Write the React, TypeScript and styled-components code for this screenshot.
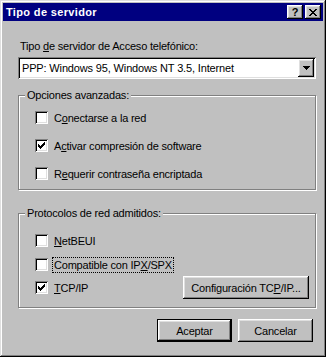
import React, { FC } from "react";
import styled, { createGlobalStyle } from "styled-components";

const GlobalStyle = createGlobalStyle`
  html, body {
    margin: 0;
    padding: 0;
    background: #c0c0c0;
  }
  body {
    font-family: "Liberation Sans", Arial, sans-serif;
    font-size: 11px;
    color: #000;
  }
`;

const raised = `
  box-shadow: inset -1px -1px #000, inset 1px 1px #fff, inset -2px -2px #808080, inset 2px 2px #dfdfdf;
`;

const sunken = `
  box-shadow: inset 1px 1px #808080, inset -1px -1px #fff, inset 2px 2px #000, inset -2px -2px #dfdfdf;
`;

const Window = styled.div`
  width: 326px;
  height: 357px;
  box-sizing: border-box;
  padding: 3px;
  background: #c0c0c0;
  box-shadow: inset -1px -1px #000, inset 1px 1px #dfdfdf, inset -2px -2px #808080, inset 2px 2px #fff;
  display: flex;
  flex-direction: column;
`;

const TitleBar = styled.div`
  height: 18px;
  background: #000080;
  display: flex;
  align-items: center;
  padding: 0 2px 0 3px;
  color: #fff;
`;

const Title = styled.span`
  flex: 1;
  font-weight: bold;
  letter-spacing: 0.35px;
  line-height: 18px;
`;

const CaptionButton = styled.button<{ $gap?: number }>`
  width: 16px;
  height: 14px;
  margin-left: ${(p) => p.$gap ?? 0}px;
  padding: 0;
  border: none;
  background: #c0c0c0;
  ${raised}
  display: flex;
  align-items: center;
  justify-content: center;
  font-family: "Liberation Sans", Arial, sans-serif;
  font-weight: bold;
  font-size: 11px;
  line-height: 14px;
  color: #000;
`;

const Content = styled.div`
  flex: 1;
  display: flex;
  flex-direction: column;
  padding: 19px 7px 0 15px;
`;

const FieldLabel = styled.div`
  line-height: 13px;
  padding-left: 2px;
  letter-spacing: -0.2px;
`;

const Combo = styled.div`
  margin-top: 4px;
  height: 22px;
  box-sizing: border-box;
  padding: 2px;
  background: #fff;
  ${sunken}
  display: flex;
`;

const ComboText = styled.span`
  flex: 1;
  line-height: 18px;
  padding-left: 2px;
  letter-spacing: -0.15px;
`;

const ComboButton = styled.span`
  width: 16px;
  height: 18px;
  background: #c0c0c0;
  ${raised}
  display: flex;
  align-items: center;
  justify-content: center;
`;

const Group = styled.div<{ $top: number; $pad: string }>`
  position: relative;
  margin-top: ${(p) => p.$top}px;
  border: 1px solid #808080;
  box-shadow: inset 1px 1px #fff, 1px 1px #fff;
  padding: ${(p) => p.$pad};
  display: flex;
  flex-direction: column;
`;

const GroupCaption = styled.span`
  position: absolute;
  top: -7px;
  left: 6px;
  padding: 0 2px;
  background: #c0c0c0;
  line-height: 13px;
  letter-spacing: -0.2px;
`;

const Row = styled.div<{ $mt?: number; $h?: number }>`
  display: flex;
  align-items: center;
  height: ${(p) => p.$h ?? 13}px;
  margin-top: ${(p) => p.$mt ?? 0}px;
`;

const Box = styled.span`
  width: 13px;
  height: 13px;
  flex: none;
  box-sizing: border-box;
  background: #fff;
  ${sunken}
  display: flex;
  align-items: center;
  justify-content: center;
`;

const CheckLabel = styled.span<{ $focus?: boolean }>`
  margin-left: 4px;
  padding: 0 1px;
  line-height: 14px;
  border: 1px dotted ${(p) => (p.$focus ? "#000" : "transparent")};
  letter-spacing: -0.2px;
  white-space: nowrap;
`;

const Button = styled.button<{ $default?: boolean; $w: number }>`
  width: ${(p) => p.$w}px;
  height: 23px;
  box-sizing: border-box;
  padding: 0;
  border: none;
  background: #c0c0c0;
  font-family: "Liberation Sans", Arial, sans-serif;
  font-size: 11px;
  letter-spacing: -0.2px;
  color: #000;
  ${(p) =>
    p.$default
      ? `box-shadow: inset 0 0 0 1px #000, inset -2px -2px #000, inset 2px 2px #fff, inset -3px -3px #808080, inset 3px 3px #dfdfdf;`
      : raised}
`;

const SideButton = styled(Button)`
  margin-left: auto;
  margin-right: 6px;
`;

const Footer = styled.div`
  display: flex;
  justify-content: flex-end;
  gap: 6px;
  margin-top: 11px;
  padding-right: 3px;
`;

const CheckMark: FC = () => (
  <svg width="7" height="7" viewBox="0 0 7 7" shapeRendering="crispEdges">
    <path
      fill="#000"
      d="M6 0h1v1H6z M5 1h2v1H5z M0 2h1v1H0z M4 2h3v1H4z M0 3h2v1H0z M3 3h3v1H3z M0 4h5v1H0z M1 5h3v1H1z M2 6h1v1H2z"
    />
  </svg>
);

const CloseGlyph: FC = () => (
  <svg width="8" height="7" viewBox="0 0 8 7" shapeRendering="crispEdges">
    <path
      fill="#000"
      d="M0 0h2v1H0z M6 0h2v1H6z M1 1h2v1H1z M5 1h2v1H5z M2 2h4v1H2z M3 3h2v1H3z M2 4h4v1H2z M1 5h2v1H1z M5 5h2v1H5z M0 6h2v1H0z M6 6h2v1H6z"
    />
  </svg>
);

const DownArrow: FC = () => (
  <svg width="7" height="4" viewBox="0 0 7 4" shapeRendering="crispEdges">
    <path fill="#000" d="M0 0h7v1H0z M1 1h5v1H1z M2 2h3v1H2z M3 3h1v1H3z" />
  </svg>
);

interface CheckProps {
  checked?: boolean;
  focus?: boolean;
  children: React.ReactNode;
}

const Check: FC<CheckProps> = ({ checked, focus, children }) => (
  <>
    <Box>{checked && <CheckMark />}</Box>
    <CheckLabel $focus={focus}>{children}</CheckLabel>
  </>
);

const App: FC = () => {
  return (
    <>
      <GlobalStyle />
      <Window>
        <TitleBar>
          <Title>Tipo de servidor</Title>
          <CaptionButton>?</CaptionButton>
          <CaptionButton $gap={2}>
            <CloseGlyph />
          </CaptionButton>
        </TitleBar>
        <Content>
          <FieldLabel>
            Tipo <u>d</u>e servidor de Acceso telefónico:
          </FieldLabel>
          <Combo>
            <ComboText>PPP: Windows 95, Windows NT 3.5, Internet</ComboText>
            <ComboButton>
              <DownArrow />
            </ComboButton>
          </Combo>

          <Group $top={16} $pad="15px 0 9px 16px">
            <GroupCaption>Opciones avanzadas:</GroupCaption>
            <Row>
              <Check>
                C<u>o</u>nectarse a la red
              </Check>
            </Row>
            <Row $mt={15}>
              <Check checked>
                A<u>c</u>tivar compresión de software
              </Check>
            </Row>
            <Row $mt={15}>
              <Check>
                R<u>e</u>querir contraseña encriptada
              </Check>
            </Row>
          </Group>

          <Group $top={23} $pad="20px 0 8px 16px">
            <GroupCaption>Protocolos de red admitidos:</GroupCaption>
            <Row>
              <Check>
                <u>N</u>etBEUI
              </Check>
            </Row>
            <Row $mt={11}>
              <Check focus>
                Compatible con IP<u>X</u>/SPX
              </Check>
            </Row>
            <Row $mt={5} $h={23}>
              <Check checked>
                <u>T</u>CP/IP
              </Check>
              <SideButton $w={126}>
                Configuración TC<u>P</u>/IP...
              </SideButton>
            </Row>
          </Group>

          <Footer>
            <Button $default $w={75}>
              Aceptar
            </Button>
            <Button $w={75}>Cancelar</Button>
          </Footer>
        </Content>
      </Window>
    </>
  );
};

export default App;
